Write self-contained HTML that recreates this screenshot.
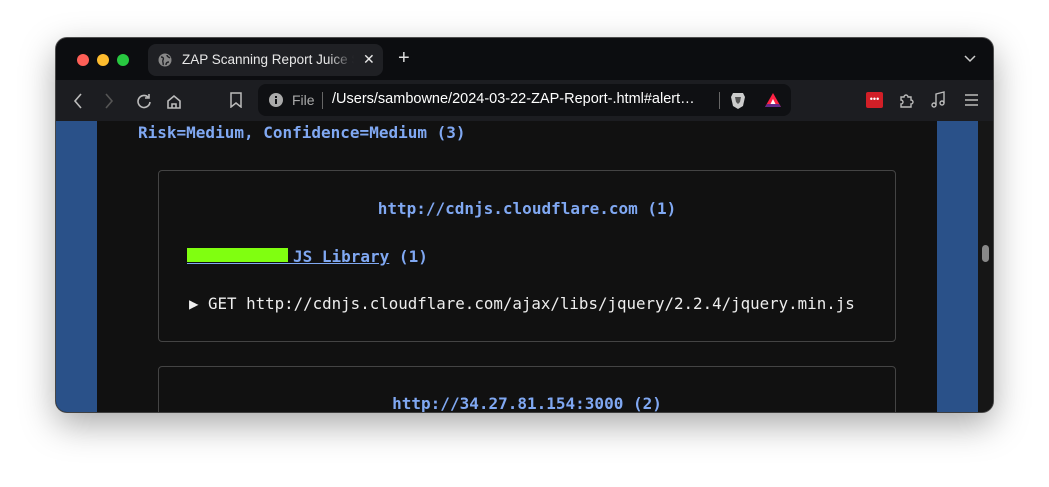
<!DOCTYPE html>
<html><head><style>
body{margin:0;width:1049px;height:487px;background:#fff;position:relative;overflow:hidden;font-family:"Liberation Sans",sans-serif}
.win{position:absolute;left:56px;top:38px;width:937px;height:374px;border-radius:11px;overflow:hidden;background:#0d0e10;box-shadow:0 12px 35px rgba(0,0,0,.35),0 0 0 1px #555}
.tb{position:absolute;left:0;top:0;width:937px;height:42px;background:#0c0d10}
.dot{position:absolute;top:16px;width:12px;height:12px;border-radius:50%}
.tab{position:absolute;left:92px;top:6px;width:235px;height:32px;background:#1f2024;border-radius:8px;color:#e8e8e8;font-size:13px}
.bar{position:absolute;left:0;top:42px;width:937px;height:41px;background:#1c1d21}
.url{position:absolute;left:202px;top:46px;width:533px;height:32px;background:#0f1013;border-radius:8px;color:#fff;font-size:14px}
.content{position:absolute;left:0;top:83px;width:937px;height:291px;background:#111}
.mono{font-family:"DejaVu Sans Mono","Liberation Mono",monospace}
.blue{color:#80a8f2;font-weight:bold;font-size:16px}
.box{position:absolute;left:102px;width:736px;border:1px solid #444;border-radius:4px}
</style></head><body>
<div class="win">
 <div class="tb">
  <div class="dot" style="left:21px;background:#fe5f57"></div>
  <div class="dot" style="left:41px;background:#febc2e"></div>
  <div class="dot" style="left:61px;background:#28c840"></div>
  <div class="tab">
   <svg style="position:absolute;left:10px;top:9px" width="14" height="14" viewBox="0 0 14 14"><circle cx="7" cy="7" r="6.5" fill="#888"/><path d="M3 4c2 0 3 1 2 3s1 3 0 5M9 2c0 2 2 2 3 3M8 12c0-2 1-3 3-3" stroke="#1f2024" stroke-width="1.4" fill="none"/></svg>
   <span style="position:absolute;left:34px;top:8px;white-space:nowrap;width:172px;overflow:hidden;font-size:13.5px;-webkit-mask-image:linear-gradient(90deg,#000 85%,transparent)">ZAP Scanning Report Juice Sh</span>
   <span style="position:absolute;left:215px;top:7px;font-size:14px">✕</span>
  </div>
  <span style="position:absolute;left:342px;top:9px;color:#ddd;font-size:20px">+</span>
  <svg style="position:absolute;left:908px;top:17px" width="12" height="8"><path d="M1 1l5 5 5-5" stroke="#ccc" stroke-width="1.5" fill="none"/></svg>
 </div>
 <div class="bar">
  <svg style="position:absolute;left:16px;top:12px" width="120" height="18" fill="none" stroke-width="1.6">
   <path d="M9 2l-6 7 6 7" stroke="#bbb"/><path d="M34 2l6 7-6 7" stroke="#555"/>
   <path d="M76 5a6 6 0 1 0 2 5M77 2v4h-4" stroke="#bbb"/>
   <path d="M96 16v-7l6-5 6 5v7zM100 16v-4h4v4" stroke="#bbb"/>
  </svg>
  <svg style="position:absolute;left:174px;top:12px" width="12" height="16"><path d="M1 1h10v14l-5-4-5 4z" stroke="#bbb" stroke-width="1.5" fill="none"/></svg>
 </div>
 <div class="url">
  <svg style="position:absolute;left:11px;top:9px" width="14" height="14"><circle cx="7" cy="7" r="7" fill="#aaa"/><rect x="6" y="6" width="2" height="5" fill="#0f1013"/><rect x="6" y="3" width="2" height="2" fill="#0f1013"/></svg>
  <span style="position:absolute;left:34px;top:8px;color:#aaa">File</span>
  <div style="position:absolute;left:64px;top:8px;width:1px;height:17px;background:#666"></div>
  <span style="position:absolute;left:74px;top:7px;white-space:nowrap;font-size:14.5px">/Users/sambowne/2024-03-22-ZAP-Report-.html#alert…</span>
  <div style="position:absolute;left:461px;top:8px;width:1px;height:17px;background:#666"></div>
  <svg style="position:absolute;left:472px;top:7px" width="16" height="18"><path d="M3 2h10l2 4-2 9-5 3-5-3-2-9z" fill="#ccc"/><path d="M5 6h6l-1 5-2 2-2-2z" fill="#555"/></svg>
  <svg style="position:absolute;left:506px;top:8px" width="18" height="16"><path d="M9 1l8 14H1z" fill="#f24"/><path d="M9 7l3 6H6z" fill="#fff"/><path d="M1 15h16l-2-3H3z" fill="#642a8a"/></svg>
 </div>
 <div style="position:absolute;left:810px;top:54px;width:17px;height:16px;background:#d21f27;border-radius:2px;color:#fff;font-size:9px;line-height:14px;text-align:center">•••</div>
 <svg style="position:absolute;left:842px;top:53px" width="90" height="18" fill="none" stroke="#bbb" stroke-width="1.4">
  <path d="M3 6h3a2 2 0 1 1 4 0h3v3a2 2 0 1 1 0 4v3H3v-3a2 2 0 1 0 0-4z"/>
  <path d="M38 14V3l8-2v11"/><circle cx="36" cy="14" r="2"/><circle cx="44" cy="12" r="2"/>
  <path d="M67 4h13M67 9h13M67 14h13"/>
 </svg>
 <div class="content">
  <div style="position:absolute;left:0;top:0;width:41px;height:291px;background:#2a5189"></div>
  <div style="position:absolute;left:881px;top:0;width:41px;height:291px;background:#2a5189"></div>
  <div style="position:absolute;left:922px;top:0;width:15px;height:291px;background:#161616"></div>
  <div style="position:absolute;left:926px;top:124px;width:7px;height:17px;background:#888;border-radius:4px"></div>
  <div class="mono blue" style="position:absolute;left:82px;top:2px">Risk=Medium, Confidence=Medium (3)</div>
  <div class="box" style="top:49px;height:170px">
   <div class="mono blue" style="position:absolute;left:0;width:736px;text-align:center;top:28px">http://cdnjs.cloudflare.com (1)</div>
   <div style="position:absolute;left:28px;top:77px;width:101px;height:14px;background:#80ff10"></div>
   <div class="mono blue" style="position:absolute;left:28px;top:76px;white-space:pre"><span style="text-decoration:underline">           JS Library</span> (1)</div>
   <div class="mono" style="position:absolute;left:30px;top:123px;color:#eee;font-size:15.8px;white-space:pre">▶ GET http://cdnjs.cloudflare.com/ajax/libs/jquery/2.2.4/jquery.min.js</div>
  </div>
  <div class="box" style="top:245px;height:100px">
   <div class="mono blue" style="position:absolute;left:0;width:736px;text-align:center;top:27px">http://34.27.81.154:3000 (2)</div>
  </div>
 </div>
</div>
</body></html>
